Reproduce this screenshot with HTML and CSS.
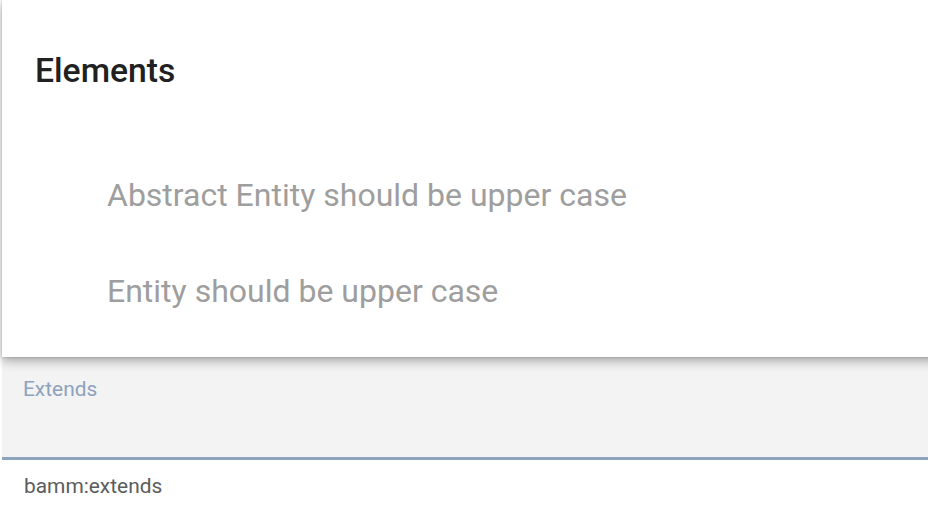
FILE: index.html
```html
<!DOCTYPE html>
<html lang="en">
<head>
    <meta charset="UTF-8">
    <meta name="viewport" content="width=device-width, initial-scale=1.0">
    <title>Extends</title>
    <link rel="stylesheet" href="styles.css">
</head>
<body>
    <div class="page">
        <div class="form">
            <div class="field">
                <label class="field-label" for="extends">Extends</label>
            </div>
            <div class="field-hint">bamm:extends</div>
        </div>

        <div class="popup">
            <h3 class="popup-title">Elements</h3>
            <ul class="popup-list">
                <li>Abstract Entity should be upper case</li>
                <li>Entity should be upper case</li>
            </ul>
        </div>
    </div>
</body>
</html>
```

FILE: styles.css
```css
body {
    margin: 0;
    font-family: Roboto, "Liberation Sans", Arial, sans-serif;
    background-color: #ffffff;
    overflow: hidden;
}
.page {
    position: relative;
    height: 524px;
    padding-left: 2px;
}
.form {
    padding-top: 340px;
}
.field {
    height: 80px;
    padding: 37px 21px 0;
    background-color: #f3f3f3;
    border-bottom: 3px solid #8ea3bd;
}
.field-label {
    display: block;
    font-size: 20.9px;
    line-height: 24px;
    color: #8da2bd;
}
.field-hint {
    margin-top: 14px;
    padding-left: 22px;
    font-size: 20.9px;
    line-height: 24px;
    color: #5c5c5c;
}
.popup {
    position: absolute;
    top: 0;
    left: 2px;
    right: -20px;
    height: 357px;
    background-color: #ffffff;
    box-shadow: 0 4px 10px rgba(0, 0, 0, 0.32), 0 0 2px rgba(0, 0, 0, 0.25);
}
.popup-title {
    margin: 51px 0 0;
    padding-left: 33px;
    font-size: 33.7px;
    font-weight: 500;
    line-height: 40px;
    color: #212121;
}
.popup-list {
    list-style: none;
    margin: 56px 0 0;
    padding: 0 0 0 105px;
}
.popup-list li {
    font-size: 32px;
    line-height: 96px;
    color: #9e9e9e;
}
```
